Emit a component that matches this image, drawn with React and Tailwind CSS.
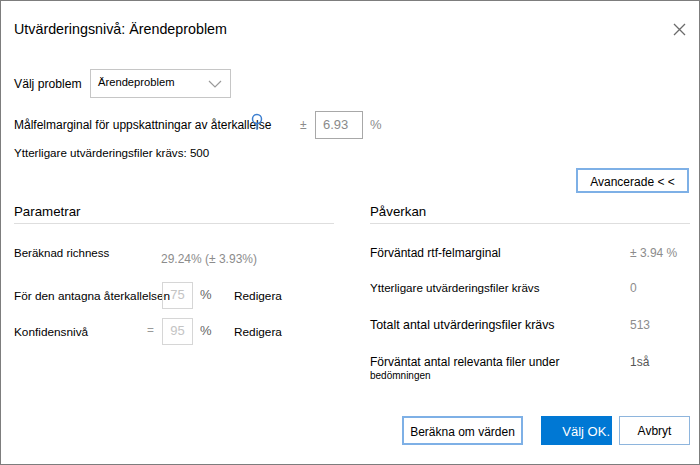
import React from "react";

function Chevron() {
  return (
    <svg width="14" height="8" viewBox="0 0 14 8" fill="none">
      <path d="M1 1 L7 7 L13 1" stroke="#9a9a9a" strokeWidth="1.2" />
    </svg>
  );
}

function CloseIcon() {
  return (
    <svg width="13" height="13" viewBox="0 0 13 13" fill="none">
      <path d="M1 1 L12 12 M12 1 L1 12" stroke="#6b6b6b" strokeWidth="1.3" />
    </svg>
  );
}

function SmallBox({ value }) {
  return (
    <div className="w-[31px] h-[27px] border border-[#d6d6d6] flex items-center justify-center text-[13px] text-[#c4c4c4]">
      {value}
    </div>
  );
}

export default function App() {
  return (
    <div
      className="w-[700px] h-[465px] bg-white border border-[#7d7d7d] flex flex-col text-black"
      style={{ fontFamily: '"Liberation Sans", Arial, sans-serif' }}
    >
      {/* header */}
      <div className="flex items-center justify-between pl-[13px] pr-[13px] h-[56px] pt-[1px]">
        <h1 className="text-[14.3px]">Utvärderingsnivå: Ärendeproblem</h1>
        <CloseIcon />
      </div>

      {/* choose problem */}
      <div className="flex items-center pl-[13px] h-[29px] mt-[12px]">
        <span className="text-[12.2px] w-[76px] pt-[2px]">Välj problem</span>
        <div className="w-[141px] h-[29px] border border-[#c6c6c6] flex items-center justify-between pl-[7px] pr-[8px]">
          <span className="text-[11.2px] -mt-[3px]">Ärendeproblem</span>
          <Chevron />
        </div>
      </div>

      {/* margin */}
      <div className="relative flex items-center pl-[13px] h-[28px] mt-[13px]">
        <span className="text-[12px] w-[286px]">Målfelmarginal för uppskattningar av återkallelse</span>
        <svg className="absolute left-[250px] top-[1px]" width="12" height="20" viewBox="0 0 12 20" fill="none">
          <circle cx="6" cy="7" r="4.5" stroke="#3d7fd0" strokeWidth="1.5" />
          <path d="M6 11.5 L6 18" stroke="#3d7fd0" strokeWidth="1.3" />
        </svg>
        <span className="text-[12px] text-[#8c8c8c] w-[15px]">±</span>
        <div className="w-[48px] h-[28px] border border-[#a8a8a8] flex items-center pl-[7px] text-[13px] text-[#8a8a8a]">
          6.93
        </div>
        <span className="text-[13px] text-[#8c8c8c] ml-[7px]">%</span>
      </div>

      <div className="pl-[13px] mt-[7px] text-[11.6px] h-[14px] leading-[14px]">Ytterligare utvärderingsfiler krävs: 500</div>

      <div className="flex justify-end pr-[10px] mt-[8px]">
        <button className="w-[113px] h-[25px] border-2 border-[#7eb0e6] flex items-center justify-center text-[12px] pt-[2px]">
          Avancerade &lt; &lt;
        </button>
      </div>

      {/* two columns */}
      <div className="grid grid-cols-[320px_320px] gap-x-[36px] pl-[13px] pr-[10px] mt-[8px]">
        {/* Parametrar */}
        <div className="flex flex-col">
          <div className="h-[23px] border-b border-[#dedede] text-[13.3px] leading-[22px]">Parametrar</div>
          <div className="flex items-center h-[28px] mt-[20px] text-[11.5px]">
            <span className="w-[147px] -mt-[8px]">Beräknad richness</span>
            <span className="text-[#8c8c8c] text-[12px] mt-[2px]">29.24% (± 3.93%)</span>
          </div>
          <div className="flex items-center h-[28px] mt-[9px] text-[11.8px]">
            <span className="w-[148px] whitespace-nowrap pt-[3px]">För den antagna återkallelsen</span>
            <SmallBox value="75" />
            <span className="w-[41px] pl-[7px] text-[13px] text-[#666]">%</span>
            <span className="text-[11.8px] pt-[3px]">Redigera</span>
          </div>
          <div className="flex items-center h-[28px] mt-[8px] text-[11.8px]">
            <span className="w-[133px] pt-[4px]">Konfidensnivå</span>
            <span className="w-[15px] text-[#999]">=</span>
            <SmallBox value="95" />
            <span className="w-[41px] pl-[7px] text-[13px] text-[#666]">%</span>
            <span className="text-[11.8px] pt-[4px]">Redigera</span>
          </div>
        </div>

        {/* Påverkan */}
        <div className="flex flex-col">
          <div className="h-[23px] border-b border-[#dedede] text-[13.3px] leading-[22px]">Påverkan</div>
          <div className="flex items-center h-[20px] mt-[19px] text-[12px]">
            <span className="w-[260px]">Förväntad rtf-felmarginal</span>
            <span className="text-[#8c8c8c]">± 3.94 %</span>
          </div>
          <div className="flex items-center h-[20px] mt-[15px] text-[11.6px]">
            <span className="w-[260px]">Ytterligare utvärderingsfiler krävs</span>
            <span className="text-[#8c8c8c] text-[12px]">0</span>
          </div>
          <div className="flex items-center h-[20px] mt-[17px] text-[12.4px]">
            <span className="w-[260px]">Totalt antal utvärderingsfiler krävs</span>
            <span className="text-[#8c8c8c] text-[12px]">513</span>
          </div>
          <div className="flex mt-[19px] text-[12px]">
            <div className="w-[260px] flex flex-col">
              <span className="leading-[16px]">Förväntat antal relevanta filer under</span>
              <span className="text-[10px] leading-[12px]">bedömningen</span>
            </div>
            <span className="text-[#555] leading-[16px]">1så</span>
          </div>
        </div>
      </div>

      {/* footer */}
      <div className="flex justify-end items-center pr-[9px] mt-auto mb-[19px] gap-[7px]">
        <button className="w-[121px] h-[29px] border-2 border-[#7eb0e6] text-[12px] flex items-center justify-center pt-[3px] mr-[11px]">
          Beräkna om värden
        </button>
        <button className="w-[71px] h-[29px] bg-[#0078d4] text-white text-[13px] flex items-center justify-end pr-[2px] pt-[3px]">
          Välj OK.
        </button>
        <button className="w-[71px] h-[29px] border border-[#8eb5dd] text-[12px] flex items-center justify-center">
          Avbryt
        </button>
      </div>
    </div>
  );
}
